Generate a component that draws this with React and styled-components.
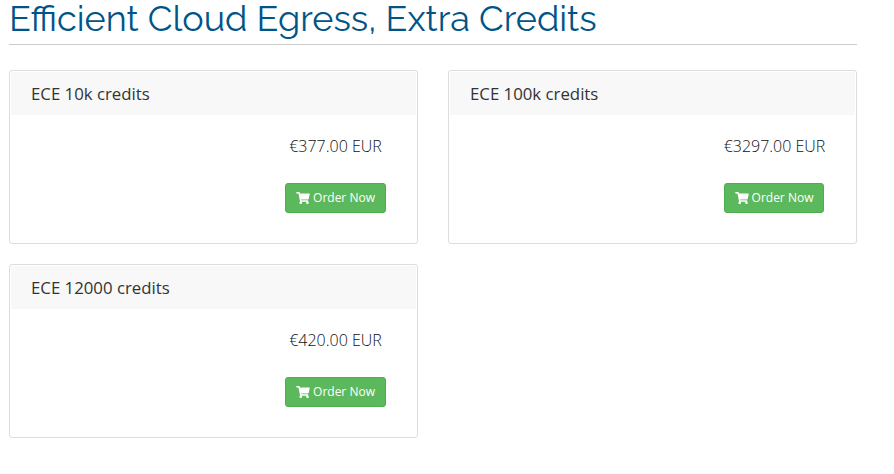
import React from "react";
import styled, { createGlobalStyle } from "styled-components";
import { FaShoppingCart } from "react-icons/fa";

const Global = createGlobalStyle`
  * { box-sizing: border-box; }
  body { margin: 0; background: #fff; color: #333; font-family: "Open Sans", sans-serif; }
`;
const Page = styled.main`
  width: 857px;
  padding-left: 9px;
`;
const Title = styled.h1`
  margin: 0 0 25px;
  height: 45px;
  border-bottom: 1px solid #ccc;
  color: #058;
  font: 400 36px/36px Raleway, Lato, sans-serif;
  white-space: nowrap;
`;
const Products = styled.div`
  display: grid;
  grid-template-columns: 409px 409px;
  gap: 20px 30px;
`;
const Product = styled.section`
  height: 174px;
  padding: 1px;
  border: 1px solid #ddd;
  border-radius: 3px;
`;
const Name = styled.header`
  height: 43px;
  padding: 0 20px;
  background: #f8f8f8;
  font-size: 16.8px;
  line-height: 43px;
`;
const Footer = styled.footer`
  display: flex;
  flex-direction: column;
  align-items: flex-start;
  width: 101px;
  margin: 19px 30px 0 auto;
`;
const Price = styled.span`
  align-self: center;
  color: #111;
  font-size: 16px;
  font-weight: 300;
  line-height: 24px;
  white-space: nowrap;
`;
const OrderButton = styled.button`
  display: flex;
  align-items: center;
  justify-content: center;
  gap: 3px;
  width: ${(p) => p.$width}px;
  height: 30px;
  margin-top: 25px;
  padding: 0;
  border: 1px solid #4cae4c;
  border-radius: 3px;
  background: #5cb85c;
  color: #fff;
  font: 12px/18px "Open Sans", sans-serif;
  svg { width: 14px; height: 12px; }
`;
const products = [
  ["ECE 10k credits", "€377.00 EUR", 101],
  ["ECE 100k credits", "€3297.00 EUR", 100],
  ["ECE 12000 credits", "€420.00 EUR", 101],
];

export default function App() {
  return (
    <Page>
      <Global />
      <Title>Efficient Cloud Egress, Extra Credits</Title>
      <Products>
        {products.map(([name, price, width]) => (
          <Product key={name}>
            <Name>{name}</Name>
            <Footer>
              <Price>{price}</Price>
              <OrderButton $width={width}><FaShoppingCart />Order Now</OrderButton>
            </Footer>
          </Product>
        ))}
      </Products>
    </Page>
  );
}
